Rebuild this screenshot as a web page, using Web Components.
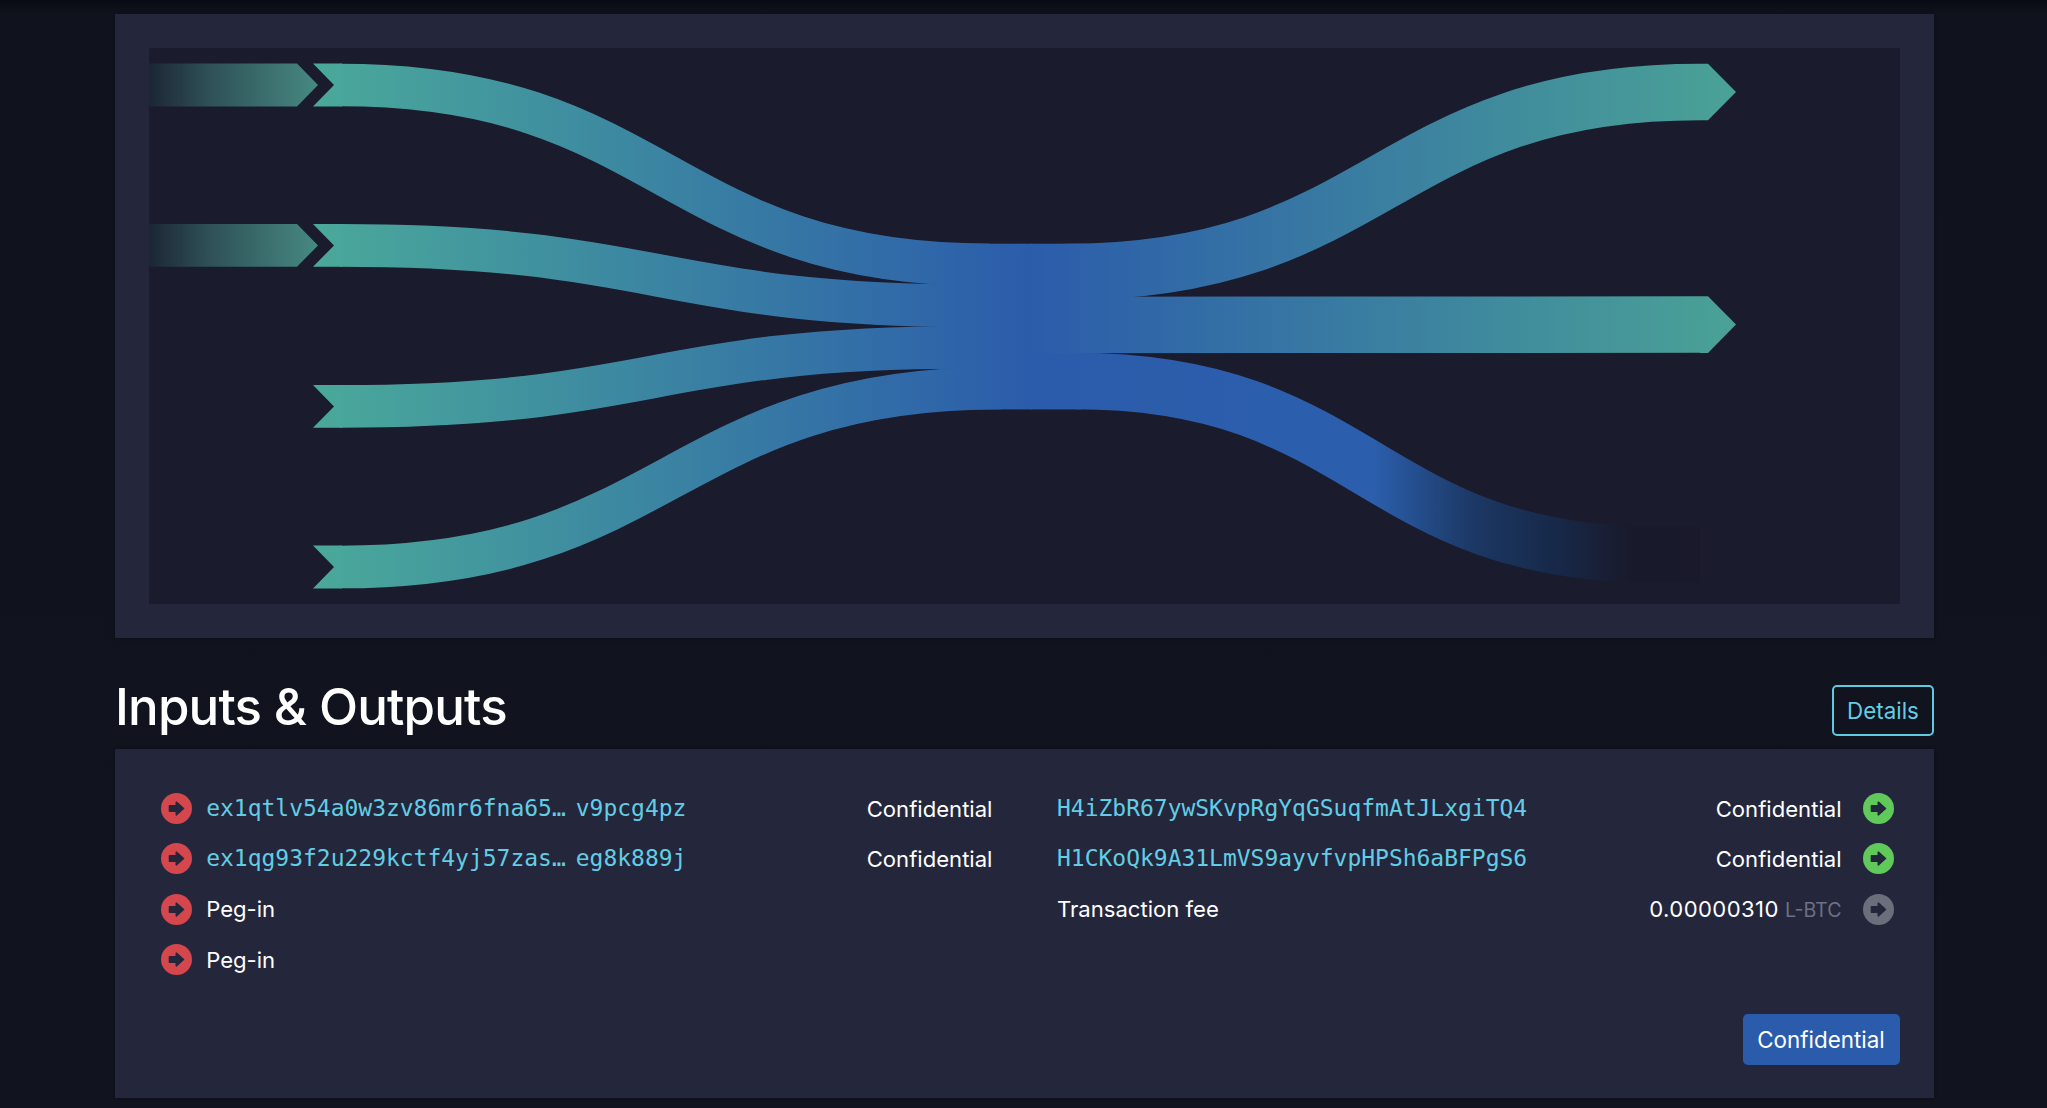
<!DOCTYPE html>
<html lang="en">
<head>
<meta charset="utf-8">
<title>Inputs &amp; Outputs</title>
<style>
  html, body { margin: 0; height: 100%; }
  body {
    background: linear-gradient(180deg, #080a13 0, #10121d 14px, #11131e 100%);
    font-family: "Inter", "Liberation Sans", sans-serif;
    color: #fff;
    overflow: hidden;
  }
</style>
</head>
<body>
<tx-page>
  <tx-panel variant="graph"><flow-graph></flow-graph></tx-panel>
  <section-head title="Inputs &amp; Outputs"><tx-button kind="outline">Details</tx-button></section-head>
  <tx-panel variant="list">
    <tx-columns>
      <div slot="left">
        <tx-row tone="red" mono="ex1qtlv54a0w3zv86mr6fna65…" tail="v9pcg4pz" value="Confidential"></tx-row>
        <tx-row tone="red" mono="ex1qg93f2u229kctf4yj57zas…" tail="eg8k889j" value="Confidential"></tx-row>
        <tx-row tone="red" label="Peg-in"></tx-row>
        <tx-row tone="red" label="Peg-in"></tx-row>
      </div>
      <div slot="right">
        <tx-row side="out" tone="green" mono="H4iZbR67ywSKvpRgYqGSuqfmAtJLxgiTQ4" value="Confidential"></tx-row>
        <tx-row side="out" tone="green" mono="H1CKoQk9A31LmVS9ayvfvpHPSh6aBFPgS6" value="Confidential"></tx-row>
        <tx-row side="out" tone="gray" label="Transaction fee" value="0.00000310" unit="L-BTC"></tx-row>
      </div>
    </tx-columns>
    <tx-footer><tx-button kind="solid">Confidential</tx-button></tx-footer>
  </tx-panel>
</tx-page>

<script>
class TxPage extends HTMLElement {
  constructor() {
    super();
    this.attachShadow({ mode: "open" }).innerHTML = /* html */`
      <style>
        :host { display: block; padding: 14px 113px 0 115px; }
      </style>
      <slot></slot>
    `;
  }
}

class TxPanel extends HTMLElement {
  constructor() {
    super();
    this.attachShadow({ mode: "open" }).innerHTML = /* html */`
      <style>
        :host {
          display: block;
          background: #24263c;
          box-shadow: 0 0 3px rgba(0, 0, 0, 0.35);
        }
        :host([variant="graph"]) { padding: 34px; }
        :host([variant="list"]) { padding: 34.5px 34.5px 33px 45.7px; }
      </style>
      <slot></slot>
    `;
  }
}

class FlowGraph extends HTMLElement {
  constructor() {
    super();
    // viewBox uses page coordinates of the inner area so the curves are easy to compare
    const band = (y0, y1, w, x0, x1, grad) => {
      const mid = (x0 + x1) / 2;
      return `<path d="M ${x0} ${y0} C ${mid} ${y0}, ${mid} ${y1}, ${x1} ${y1}" fill="none" stroke="url(#${grad})" stroke-width="${w}"/>`;
    };
    const inTip = (y, h, grad) => `<polygon points="313,${y - h} 342,${y - h} 342,${y + h} 313,${y + h} 334,${y}" fill="url(#${grad})"/>`;
    const outTip = (y, h) => `<polygon points="1700,${y - h} 1708,${y - h} 1736,${y} 1708,${y + h} 1700,${y + h}" fill="url(#out)"/>`;
    const fadeTip = (y, h) => `<polygon points="149,${y - h} 297,${y - h} 318,${y} 297,${y + h} 149,${y + h}" fill="url(#fade)"/>`;

    this.attachShadow({ mode: "open" }).innerHTML = /* html */`
      <style>
        :host { display: block; background: #1a1b2c; height: 556px; }
        svg { display: block; width: 100%; height: 100%; }
      </style>
      <svg viewBox="149 48 1751 556" preserveAspectRatio="none">
        <defs>
          <linearGradient id="in" gradientUnits="userSpaceOnUse" x1="313" y1="0" x2="1031" y2="0">
            <stop offset="0" stop-color="#4aa99a"/><stop offset="1" stop-color="#2b5cab"/>
          </linearGradient>
          <linearGradient id="out" gradientUnits="userSpaceOnUse" x1="1031" y1="0" x2="1736" y2="0">
            <stop offset="0" stop-color="#2b5cab"/><stop offset="1" stop-color="#4aa296"/>
          </linearGradient>
          <linearGradient id="fade" gradientUnits="userSpaceOnUse" x1="149" y1="0" x2="318" y2="0">
            <stop offset="0" stop-color="#1c2634"/><stop offset="0.35" stop-color="#2e5056"/>
            <stop offset="0.85" stop-color="#417c79"/><stop offset="1" stop-color="#468983"/>
          </linearGradient>
          <linearGradient id="burn" gradientUnits="userSpaceOnUse" x1="1031" y1="0" x2="1700" y2="0">
            <stop offset="0" stop-color="#2b5cab"/><stop offset="0.51" stop-color="#2b5fad"/>
            <stop offset="0.66" stop-color="#1c3865"/><stop offset="0.78" stop-color="#17294a"/>
            <stop offset="0.88" stop-color="#191c2f"/><stop offset="0.91" stop-color="#18192a"/>
            <stop offset="1" stop-color="#19192b"/>
          </linearGradient>
        </defs>
        ${band(85, 265, 42.7, 340, 990, "in")}
        ${band(245.4, 306, 42.7, 340, 980, "in")}
        ${band(406.4, 347.5, 42.7, 340, 965, "in")}
        ${band(567, 388, 42.7, 340, 1002, "in")}
        <rect x="960" y="243.7" width="72" height="165.7" fill="url(#in)"/>
        <rect x="1031" y="243.7" width="70" height="109.6" fill="url(#out)"/>
        <rect x="1031" y="353" width="50" height="56.4" fill="url(#burn)"/>
        ${band(92, 272, 56.5, 1700, 1065, "out")}
        ${band(324.6, 325, 56.5, 1700, 1065, "out")}
        ${band(555, 381, 56.5, 1660, 1075, "burn")}
        <rect x="1659" y="526.7" width="41" height="56.5" fill="url(#burn)"/>
        ${inTip(85, 21.4, "in")}
        ${inTip(245.4, 21.4, "in")}
        ${inTip(406.4, 21.4, "in")}
        ${inTip(567, 21.4, "in")}
        ${outTip(92, 28.3)}
        ${outTip(324.6, 28.3)}
        ${fadeTip(85, 21.4)}
        ${fadeTip(245.4, 21.4)}
      </svg>
    `;
  }
}

class SectionHead extends HTMLElement {
  connectedCallback() {
    const title = this.getAttribute("title") ?? "";
    this.attachShadow({ mode: "open" }).innerHTML = /* html */`
      <style>
        :host {
          display: flex;
          justify-content: space-between;
          align-items: flex-start;
          height: 64px;
          padding-top: 47px;
        }
        h2 {
          margin: -9px 0 0;
          font-size: 51px;
          line-height: 62px;
          font-weight: 500;
          letter-spacing: -0.85px;
        }
      </style>
      <h2>${title}</h2>
      <slot></slot>
    `;
  }
}

class TxButton extends HTMLElement {
  constructor() {
    super();
    this.attachShadow({ mode: "open" }).innerHTML = /* html */`
      <style>
        :host {
          display: inline-flex;
          align-items: center;
          justify-content: center;
          box-sizing: border-box;
          height: 51px;
          border-radius: 5px;
          font-size: 22.4px;
          white-space: nowrap;
        }
        :host([kind="outline"]) {
          width: 102px;
          border: 2px solid #5fc9e0;
          color: #62cde5;
        }
        :host([kind="solid"]) {
          width: 157px;
          background: #2b5cab;
          color: #fff;
        }
      </style>
      <slot></slot>
    `;
  }
}

class TxColumns extends HTMLElement {
  constructor() {
    super();
    this.attachShadow({ mode: "open" }).innerHTML = /* html */`
      <style>
        :host {
          display: grid;
          grid-template-columns: 831.8px 836.5px;
          justify-content: space-between;
          height: 201px;
          padding-right: 6px;
        }
      </style>
      <slot name="left"></slot>
      <slot name="right"></slot>
    `;
  }
}

class TxFooter extends HTMLElement {
  constructor() {
    super();
    this.attachShadow({ mode: "open" }).innerHTML = /* html */`
      <style>
        :host { display: flex; justify-content: flex-end; margin-top: 29.5px; }
      </style>
      <slot></slot>
    `;
  }
}

class ArrowIcon extends HTMLElement {
  connectedCallback() {
    const colors = { red: "#d4474c", green: "#5fc95a", gray: "#6b6e7b" };
    const fill = colors[this.getAttribute("tone")] ?? colors.gray;
    this.attachShadow({ mode: "open" }).innerHTML = /* html */`
      <style>
        :host { display: block; width: 31px; height: 31px; flex: none; }
        svg { display: block; }
      </style>
      <svg width="31" height="31" viewBox="0 0 31 31">
        <circle cx="15.5" cy="15.5" r="15.5" fill="${fill}"/>
        <path d="M8.5 12.8h6.8V9.2l7.2 6.3-7.2 6.3v-3.6H8.5z" fill="#24263c" stroke="#24263c" stroke-width="1.6" stroke-linejoin="round"/>
      </svg>
    `;
  }
}

class TxRow extends HTMLElement {
  connectedCallback() {
    const side = this.getAttribute("side") ?? "in";
    const tone = this.getAttribute("tone") ?? "gray";
    const mono = this.getAttribute("mono");
    const tail = this.getAttribute("tail");
    const label = this.getAttribute("label");
    const value = this.getAttribute("value");
    const unit = this.getAttribute("unit");

    const who = mono
      ? `<span class="addr"><span>${mono}</span>${tail ? `<span>${tail}</span>` : ""}</span>`
      : `<span class="label">${label ?? ""}</span>`;
    const amount = value
      ? `<span class="value">${unit ? `<span class="num">${value}</span> <span class="unit">${unit}</span>` : value}</span>`
      : "";
    const icon = `<arrow-icon tone="${tone}"></arrow-icon>`;

    this.attachShadow({ mode: "open" }).innerHTML = /* html */`
      <style>
        :host {
          display: flex;
          align-items: center;
          height: 50.3px;
          font-size: 22.1px;
          white-space: nowrap;
        }
        .addr {
          display: flex;
          gap: 10px;
          margin-top: -1px;
          font-family: "DejaVu Sans Mono", "Liberation Mono", monospace;
          font-size: 22.97px;
          color: #62cde5;
        }
        .label { color: #fff; }
        .value { margin-left: auto; color: #fff; }
        .num { letter-spacing: 0.4px; }
        .unit { font-size: 19.6px; color: #6e7182; }
        arrow-icon { margin-right: 14.5px; }
        :host([side="out"]) arrow-icon { margin: 0 0 0 21px; }
      </style>
      ${side === "in" ? icon : ""}${who}${amount}${side === "out" ? icon : ""}
    `;
  }
}

customElements.define("tx-page", TxPage);
customElements.define("tx-panel", TxPanel);
customElements.define("flow-graph", FlowGraph);
customElements.define("section-head", SectionHead);
customElements.define("tx-button", TxButton);
customElements.define("tx-columns", TxColumns);
customElements.define("tx-footer", TxFooter);
customElements.define("arrow-icon", ArrowIcon);
customElements.define("tx-row", TxRow);
</script>
</body>
</html>
